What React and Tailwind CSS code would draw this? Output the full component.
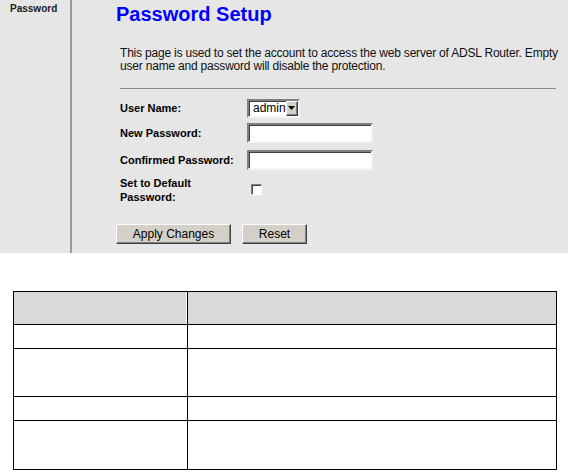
import React from "react";

const sunken =
  "border-2 border-t-[#808080] border-l-[#808080] border-b-[#f4f4f4] border-r-[#f4f4f4] shadow-[inset_1px_1px_0_#404040]";

const raised =
  "border border-t-white border-l-white border-b-[#404040] border-r-[#404040] shadow-[inset_-1px_-1px_0_#808080] bg-[#d4d0c8]";

function Row({ label, height, children }) {
  return (
    <div className={`ml-1 flex items-center ${height}`}>
      <div className="w-[127px] text-[11px] font-bold leading-[14px] text-black">{label}</div>
      <div className="flex items-center">{children}</div>
    </div>
  );
}

function Select() {
  return (
    <span className={`flex h-[19px] w-[53px] items-stretch bg-white ${sunken}`}>
      <span className="flex-1 pl-[4px] text-[12px] leading-[15px] text-black">admin</span>
      <span className={`flex w-[13px] items-center justify-center ${raised}`}>
        <svg width="7" height="4" viewBox="0 0 7 4">
          <path d="M0 0h7L3.5 4z" fill="#000" />
        </svg>
      </span>
    </span>
  );
}

function TextBox() {
  return <span className={`block h-[20px] w-[126px] bg-white ${sunken}`} />;
}

const rows = ["h-[24px]", "h-[48px]", "h-[24px]", "h-[48px]"];

export default function App() {
  return (
    <div className="h-[474px] w-[568px] bg-white font-['Liberation_Sans',Arial,sans-serif] text-black">
      <div className="flex h-[253px] bg-[#e6e6e6]">
        <aside className="w-[72px] shrink-0 border-r-2 border-[#9a9a9a] pl-[10px] pt-[3px]">
          <p className="text-[10px] font-bold leading-[12px] text-[#1a1a1a]">Password</p>
        </aside>

        <main className="flex-1 pl-[44px] pt-[3px]">
          <h1 className="text-[20px] font-bold leading-[23px] text-[#0000ff]">Password Setup</h1>
          <p className="ml-1 mt-[21px] w-[440px] text-[12px] leading-[13px] tracking-[-0.2px] text-[#111]">
            This page is used to set the account to access the web server of ADSL Router. Empty user name and
            password will disable the protection.
          </p>
          <hr className="ml-1 mt-[15px] w-[436px] border-[#8a8a8a]" />

          <div className="mt-[7px]">
            <Row label="User Name:" height="h-[24px]">
              <Select />
            </Row>
            <Row label="New Password:" height="h-[26px]">
              <TextBox />
            </Row>
            <Row label="Confirmed Password:" height="h-[27px]">
              <TextBox />
            </Row>
            <Row
              label={
                <>
                  Set to Default
                  <br />
                  Password:
                </>
              }
              height="h-[33px]"
            >
              <span className="ml-[4px] block h-[11px] w-[11px] border border-t-[#808080] border-l-[#808080] border-b-white border-r-white bg-white shadow-[inset_1px_1px_0_#404040]" />
            </Row>
          </div>

          <div className="mt-[18px] flex">
            <button className={`h-[20px] w-[115px] text-[12px] leading-[16px] text-black ${raised}`}>
              Apply Changes
            </button>
            <button className={`ml-[11px] h-[20px] w-[65px] text-[12px] leading-[16px] text-black ${raised}`}>
              Reset
            </button>
          </div>
        </main>
      </div>

      <div className="ml-[13px] mt-[38px] w-[544px] border border-black">
        <div className="flex h-[33px] border-b border-black bg-[#d9d9d9]">
          <div className="w-[174px] border-r border-black shadow-[inset_-1px_0_0_#fff]" />
          <div className="flex-1" />
        </div>
        {rows.map((h, i) => (
          <div key={i} className={`flex ${h} ${i < rows.length - 1 ? "border-b border-black" : ""}`}>
            <div className="w-[174px] border-r border-black" />
            <div className="flex-1" />
          </div>
        ))}
      </div>
    </div>
  );
}
